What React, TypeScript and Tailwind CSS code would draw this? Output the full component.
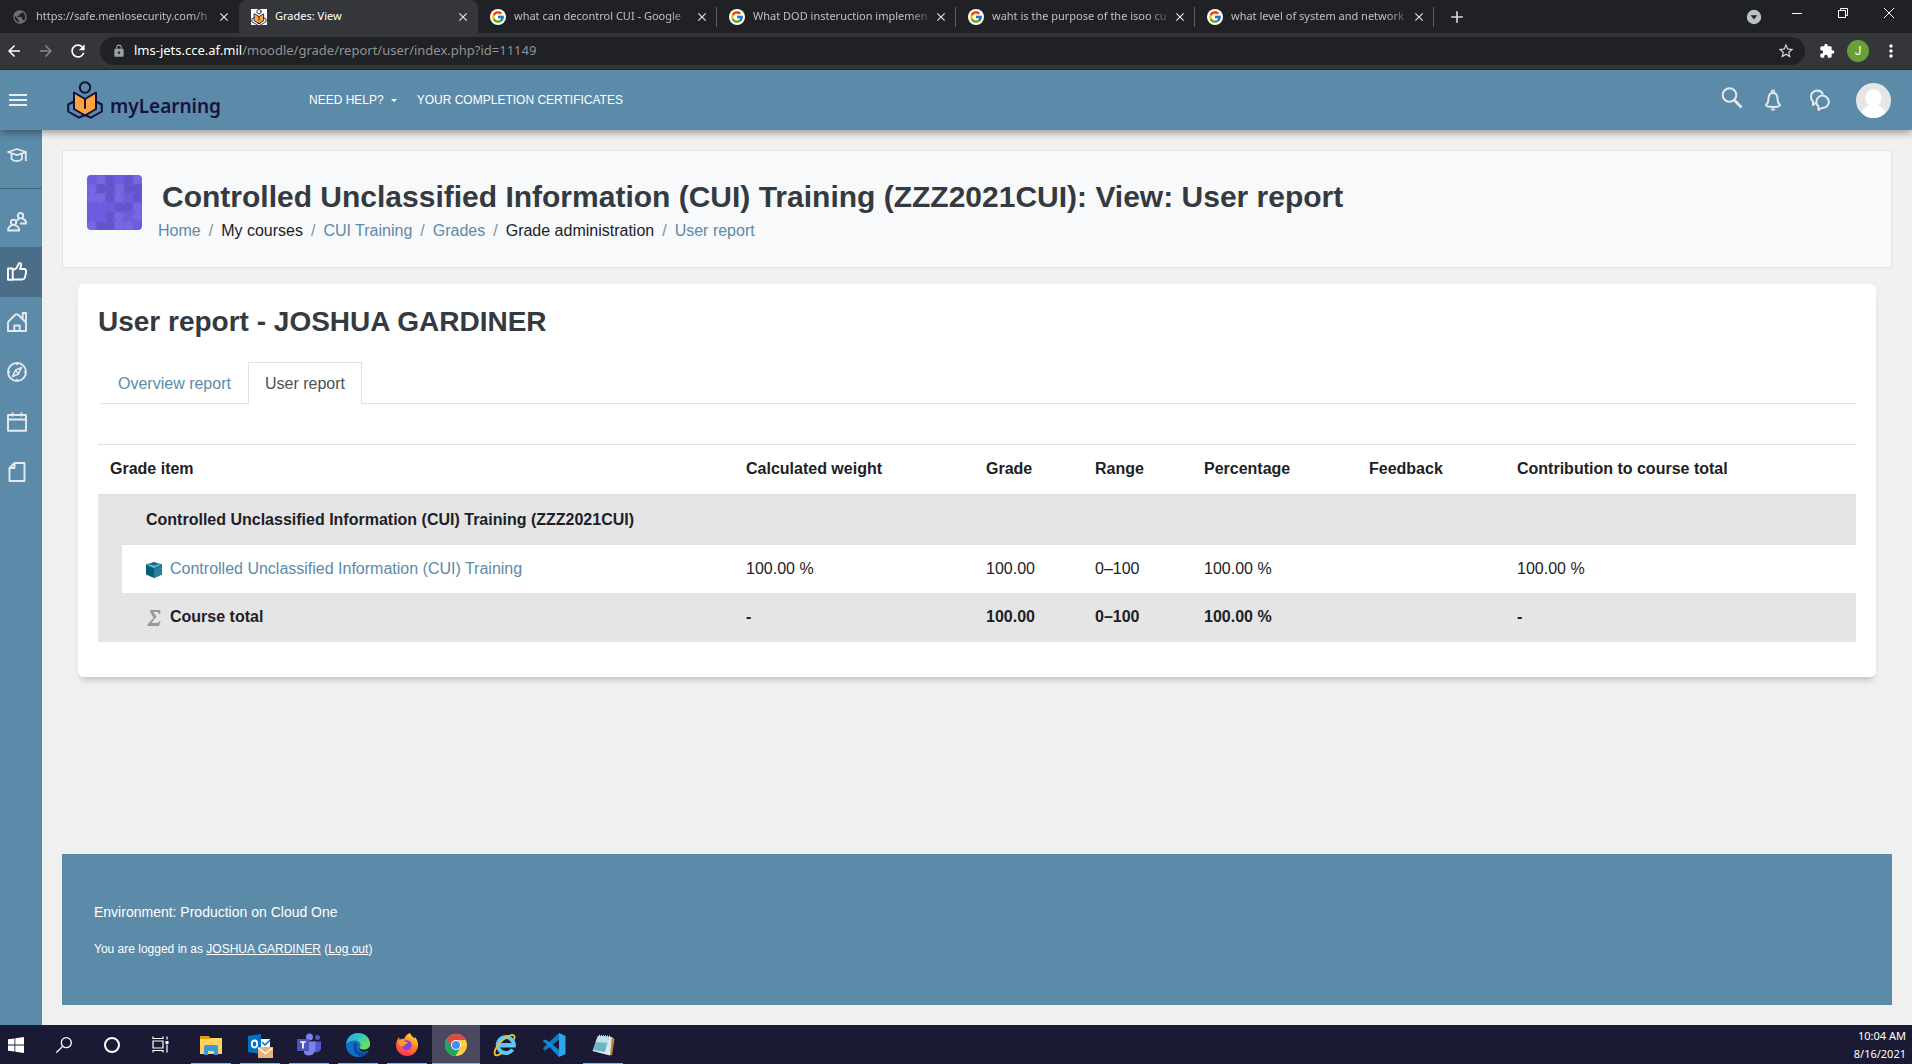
import type { ReactNode } from "react";
import { FcGoogle } from "react-icons/fc";
import { MdExtension, MdLock, MdMoreVert, MdPublic, MdRefresh, MdStarBorder, MdArrowBack, MdArrowForward, MdClose, MdAdd } from "react-icons/md";

/* ---------- browser chrome ---------- */

function LogoMark({ className }: { className: string }) {
  return (
    <svg viewBox="0 0 36 38" className={className} aria-hidden="true">
      <path d="M7 11.500 18 18l11-6.500V29l-11 5.500L7 29z" fill="#ffa13d" />
      <g fill="none" stroke="#13103f" strokeWidth="2" strokeLinejoin="round" strokeLinecap="round">
        <circle cx="18" cy="6.500" r="5.200" />
        <path d="M7 11.500 18 18l11-6.500V28l-11 6.500L7 28z" />
        <path d="M7 20.500 1.200 23.500v7L12 36.700l6-2.700 6 2.700 10.800-6.200v-7L29 20.500" />
        <path d="M18 18v9" />
      </g>
    </svg>
  );
}

const googleIcon = (
  <span className="flex size-4 items-center justify-center rounded-full bg-white">
    <FcGoogle className="size-3.5" />
  </span>
);

const browserTabs: { title: string; icon: ReactNode; active?: boolean; line?: boolean }[] = [
  { title: "https://safe.menlosecurity.com/h", icon: <MdPublic className="size-4 text-[#6f7377]" /> },
  {
    title: "Grades: View",
    active: true,
    icon: (
      <span className="flex size-4 items-center justify-center bg-white">
        <LogoMark className="size-4" />
      </span>
    ),
  },
  { title: "what can decontrol CUI - Google", icon: googleIcon, line: true },
  { title: "What DOD insteruction implemen", icon: googleIcon, line: true },
  { title: "waht is the purpose of the isoo cu", icon: googleIcon, line: true },
  { title: "what level of system and network", icon: googleIcon, line: true },
];

function BrowserTabs() {
  return (
    <div className="flex h-[33px] items-stretch bg-[#202124]">
      {browserTabs.map((t) => (
        <div
          key={t.title}
          className={
            t.active
              ? "flex w-[239px] items-center rounded-t-lg bg-[#35363a] pl-3 text-white"
              : "flex w-[239px] items-center pl-3 text-[#bdc1c6]"
          }
        >
          {t.icon}
          <button
            className={
              t.active
                ? "ml-2 w-[174px] text-left whitespace-nowrap"
                : "ml-2 w-[174px] text-left whitespace-nowrap [mask-image:linear-gradient(to_right,black_156px,transparent_182px)]"
            }
          >
            {t.title}
          </button>
          <button aria-label={"Close " + t.title} className="ml-[7px] text-[#e3e5e8]">
            <MdClose className="size-3.5" />
          </button>
          {t.line && <span className="ml-auto h-5 w-px bg-[#5a5d61]" />}
        </div>
      ))}
      <button aria-label="New tab" className="ml-[13px] flex items-center text-[#d5d7da]">
        <MdAdd className="size-5" />
      </button>
      <div className="ml-auto flex items-center">
        <button aria-label="Search tabs" className="mr-2 flex size-6 items-center justify-center">
          <svg viewBox="0 0 16 16" className="size-4">
            <circle cx="8" cy="8" r="7.200" fill="#bdc1c6" />
            <path d="M4.700 6.300h6.600L8 10.600z" fill="#202124" />
          </svg>
        </button>
        <div className="flex h-full pb-[7px]">
          <button aria-label="Minimize" className="flex w-[46px] items-center justify-center">
            <svg viewBox="0 0 10 10" className="size-2.5" stroke="#fff" fill="none"><path d="M0 5.500h10" /></svg>
          </button>
          <button aria-label="Restore" className="flex w-[46px] items-center justify-center">
            <svg viewBox="0 0 10 10" className="size-2.5" stroke="#fff" fill="none">
              <path d="M.5 2.500h7v7h-7zM2.500 2.500v-2h7v7h-2" />
            </svg>
          </button>
          <button aria-label="Close window" className="flex w-[46px] items-center justify-center">
            <svg viewBox="0 0 10 10" className="size-2.5" stroke="#fff" fill="none"><path d="M0 0l10 10M10 0L0 10" /></svg>
          </button>
        </div>
      </div>
    </div>
  );
}

function AddressBar() {
  return (
    <div className="flex h-[37px] items-center border-b border-[#292a2d] bg-[#35363a] pl-1 text-white">
      <button aria-label="Back" className="flex w-5 justify-center"><MdArrowBack className="size-[18px]" /></button>
      <button aria-label="Forward" className="ml-3 flex w-5 justify-center text-[#85888b]"><MdArrowForward className="size-[18px]" /></button>
      <button aria-label="Reload" className="ml-3 flex w-5 justify-center"><MdRefresh className="size-5" /></button>
      <div className="ml-3 flex h-7 flex-1 items-center rounded-full bg-[#202124] pr-2.5 pl-3 text-[13px]">
        <MdLock className="size-3.5 text-[#9aa0a6]" />
        <div className="ml-2 flex-1 text-[#8f9398]">
          <span className="text-white">lms-jets.cce.af.mil</span>/moodle/grade/report/user/index.php?id=11149
        </div>
        <button aria-label="Bookmark this page"><MdStarBorder className="size-[18px] text-[#d5d7da]" /></button>
      </div>
      <button aria-label="Extensions" className="ml-3.5 flex"><MdExtension className="size-4" /></button>
      <button aria-label="Profile J" className="ml-3 flex size-[22px] items-center justify-center rounded-full bg-[#689f38] font-['Roboto',sans-serif] text-xs">
        J
      </button>
      <button aria-label="Browser menu" className="mr-[11px] ml-3 flex"><MdMoreVert className="size-5" /></button>
    </div>
  );
}

/* ---------- site header ---------- */

function SiteHeader() {
  return (
    <header className="relative z-10 flex h-[60px] items-center bg-[#5c8aa9] text-white shadow-[0_3px_7px_rgba(0,0,0,0.35)]">
      <button aria-label="Toggle side panel" className="ml-[9px] flex h-3 w-[18px] flex-col justify-between">
        <span className="h-0.5 bg-[#e7eef3]" />
        <span className="h-0.5 bg-[#e7eef3]" />
        <span className="h-0.5 bg-[#e7eef3]" />
      </button>
      <a href="#home" className="ml-10 flex w-[242px] items-center">
        <LogoMark className="h-[38px] w-9" />
        <span className="mt-3 ml-[7px] font-['Noto_Sans',sans-serif] text-[19px] leading-6 font-semibold text-[#17123f]">myLearning</span>
      </a>
      <nav className="flex items-center text-xs">
        <button className="flex items-center">
          NEED HELP?
          <span className="ml-[7px] border-x-[3px] border-t-[3px] border-x-transparent border-t-white" />
        </button>
        <a href="#certificates" className="ml-5">YOUR COMPLETION CERTIFICATES</a>
      </nav>
      <div className="mr-[21px] ml-auto flex items-center text-[#e3ebf1]">
        <button aria-label="Search" className="mb-1">
          <svg viewBox="0 0 22 22" className="size-[22px]" fill="none" stroke="currentColor" strokeWidth="2">
            <circle cx="8.500" cy="8" r="6.800" /><path d="M13.300 13 20.500 20.500" strokeWidth="2.600" />
          </svg>
        </button>
        <button aria-label="Notifications" className="ml-5">
          <svg viewBox="0 0 20 22" className="h-[22px] w-5" fill="none" stroke="currentColor" strokeWidth="2" strokeLinejoin="round">
            <path d="M10 4c-3.200 0-4.500 2.700-4.500 6 0 3-.7 4.200-2.500 6 0 1.500 1.500 1.900 7 1.900s7-.4 7-1.900c-1.800-1.800-2.500-3-2.500-6 0-3.300-1.300-6-4.500-6z" />
            <circle cx="10" cy="2.600" r="1.400" strokeWidth="1.600" /><path d="M8.300 20.500h3.400" />
          </svg>
        </button>
        <button aria-label="Messages" className="ml-[26px]">
          <svg viewBox="0 0 22 22" className="size-[22px]" fill="none" stroke="currentColor" strokeWidth="2" strokeLinejoin="round">
            <path d="M14 5.300A6.300 6.300 0 0 0 2 8c0 2 .8 3.400 2 4.500V16l3-2.200" />
            <path d="M9.500 17.500A6.200 6.200 0 1 1 13 19l-3.500 2z" />
          </svg>
        </button>
        <button aria-label="User menu" className="ml-[25px]">
          <svg viewBox="0 0 35 35" className="size-[35px]">
            <defs><clipPath id="avatar"><circle cx="17.500" cy="17.500" r="17.500" /></clipPath></defs>
            <g clipPath="url(#avatar)">
              <rect width="35" height="35" fill="#e6e6e6" />
              <ellipse cx="17.500" cy="15" rx="8" ry="9" fill="#fff" />
              <path d="M5 35c0-9 5-13 12.500-13S30 26 30 35z" fill="#fff" />
            </g>
          </svg>
        </button>
      </div>
    </header>
  );
}

/* ---------- sidebar ---------- */

const sideItems: { label: string; active?: boolean; art: ReactNode }[] = [
  {
    label: "Participants",
    art: (
      <>
        <circle cx="6.500" cy="10.300" r="2.700" /><path d="M4.800 13.300C2.500 14 1 15.800 1 18.500h11.200c0-2.700-1.500-4.500-4-5.200" />
        <circle cx="13.500" cy="3.700" r="2.700" /><path d="M11.800 7c-1 .4-1.600 1-2 1.700M15.300 6.700c2.400.8 3.800 2.400 3.800 4.800h-6" />
      </>
    ),
  },
  {
    label: "Grades",
    active: true,
    art: <path d="M1 6.500h4.700v11.300H1zM5.700 8 9 6.700C10.300 5 11 3 12 1.200c2-.5 2.500 1 2 2.600L13 7h4.500c2.200.6 1.700 2.400 1.400 4.300l-1 4.200c-.5 1.500-1.200 2-2.800 2H5.700" />,
  },
  {
    label: "Site home",
    art: <path d="M1 10v9h18V1h-3.300v5M1 10l7.500-7.500H11l8 8M7.300 19v-5.500h5.400V19" />,
  },
  {
    label: "Dashboard",
    art: (
      <>
        <circle cx="10" cy="10" r="9" />
        <path d="M14.500 5.500 11.500 12l-6 2.500 3-6.300zM8.500 8.500l3 3M10 1v2.200M10 16.800V19M1 10h2.200M16.800 10H19" strokeWidth="1.500" />
      </>
    ),
  },
  { label: "Calendar", art: <path d="M1 3h18v15.700H1zM1 7.500h18M5.500.5v4M14.500.5v4" /> },
  { label: "Private files", art: <path d="M7.500 1H17.500v18H2.500V6zM7.500 1v5h-5" /> },
];

function Sidebar() {
  return (
    <aside className="flex w-[42px] shrink-0 flex-col bg-[#5c8aa9] text-[#e3ebf1]">
      <button aria-label="Course" className="mb-2 flex h-[59px] items-center border-b border-[#43667d] pb-2 pl-[7px]">
        <svg viewBox="0 0 20 14" className="h-3.5 w-5" fill="none" stroke="currentColor" strokeWidth="1.800" strokeLinejoin="round">
          <path d="M1 4 10 1l9 3-9 3.200zM4.500 5.500V11c2 2.700 8.500 2.700 10.500 0V5.500M18.800 4v9" />
        </svg>
      </button>
      {sideItems.map((s) => (
        <button
          key={s.label}
          aria-label={s.label}
          className={s.active ? "flex h-[50px] items-center bg-[#4a6e87] pl-[7px] text-white" : "flex h-[50px] items-center pl-[7px]"}
        >
          <svg viewBox="0 0 20 20" className="size-5" fill="none" stroke="currentColor" strokeWidth="1.900" strokeLinejoin="round">
            {s.art}
          </svg>
        </button>
      ))}
    </aside>
  );
}

/* ---------- page content ---------- */

const dots = [
  [1, 0, "l"], [2, 0, "d"], [4, 0, "d"], [5, 0, "l"], [0, 1, "l"], [1, 1, "d"], [2, 1, "d"], [3, 1, "l"], [4, 1, "d"], [5, 1, "d"],
  [0, 2, "l"], [1, 2, "l"], [2, 2, "d"], [3, 2, "l"], [5, 2, "d"], [3, 3, "d"], [4, 3, "d"], [5, 3, "l"], [2, 4, "d"], [3, 4, "l"],
  [5, 4, "l"], [0, 5, "l"], [1, 5, "d"], [2, 5, "d"], [3, 5, "l"], [4, 5, "l"],
] as const;

function CourseImage() {
  return (
    <svg viewBox="0 0 55 55" className="size-[55px] shrink-0 rounded" role="img" aria-label="Course image">
      <rect width="55" height="55" fill="#6c5ce0" />
      {dots.map(([x, y, t]) => (
        <circle
          key={x + "-" + y}
          cx={x * 9.2 + 4.6}
          cy={y * 9.2 + 4.6}
          r="4.900"
          fill={t === "l" ? "#fff" : "#222"}
          opacity={t === "l" ? 0.08 : 0.1}
        />
      ))}
    </svg>
  );
}

const crumbs = [
  { t: "Home", link: true },
  { t: "My courses" },
  { t: "CUI Training", link: true },
  { t: "Grades", link: true },
  { t: "Grade administration" },
  { t: "User report", link: true },
];

function PageHeader() {
  return (
    <section className="flex border border-[#dee2e6] bg-[#f8f9fb] py-6 pl-6">
      <CourseImage />
      <div className="ml-4">
        <h1 className="ml-1 text-[30px] leading-[44px] font-bold text-[#343a40]">
          Controlled Unclassified Information (CUI) Training (ZZZ2021CUI): View: User report
        </h1>
        <ol className="flex leading-6 text-[#1d2125]">
          {crumbs.map((c, i) => (
            <li key={c.t} className="flex">
              {i > 0 && <span className="px-2 text-[#868e96]">/</span>}
              {c.link ? <a href="#crumb" className="text-[#5c8aa9]">{c.t}</a> : c.t}
            </li>
          ))}
        </ol>
      </div>
    </section>
  );
}

function ScormIcon() {
  return (
    <svg viewBox="0 0 16 16" className="mt-0.5 size-4" aria-hidden="true">
      <path d="M8 0l8 2.500v10L8 16l-8-3.500v-10z" fill="#00607a" />
      <path d="M8 7 16 3.500v9L8 16z" fill="#2b7f96" />
      <path d="M.8 3 8 .8 15.200 3 8 6.200z" fill="#63b3c8" />
      <path d="M3.500 2.200 8 .6l4.500 1.600L8 3.600z" fill="#0a6a84" />
    </svg>
  );
}

function SigmaIcon() {
  return (
    <svg viewBox="0 0 16 16" className="mt-0.5 size-4" aria-hidden="true">
      <path d="M4 0h10.500l-.5 4h-1.200c0-1.500-.8-2-2.300-2H7.500l3 4.500-5 6.500h4.700c2 0 2.800-.8 3.300-2h1.200L13 16H1.500v-1.500L7.500 8 4 1.500z" fill="#999" />
    </svg>
  );
}

function GradeTable() {
  return (
    <table className="mt-10 w-full table-fixed border-collapse text-left text-[#1d2125]">
      <colgroup>
        <col className="w-6" />
        <col className="w-[612px]" />
        <col className="w-[240px]" />
        <col className="w-[109px]" />
        <col className="w-[109px]" />
        <col className="w-[165px]" />
        <col className="w-[148px]" />
        <col />
      </colgroup>
      <thead>
        <tr className="h-[50px] border-t border-b-2 border-t-[#dee2e6] border-b-[#dee2e6]">
          <th colSpan={2} className="px-3">Grade item</th>
          <th className="px-3">Calculated weight</th>
          <th className="px-3">Grade</th>
          <th className="px-3">Range</th>
          <th className="px-3">Percentage</th>
          <th className="px-3">Feedback</th>
          <th className="px-3">Contribution to course total</th>
        </tr>
      </thead>
      <tbody>
        <tr className="h-[50px] bg-[#e5e5e5]">
          <td rowSpan={3} />
          <th colSpan={7} className="border-b border-[#dee2e6] px-6">
            Controlled Unclassified Information (CUI) Training (ZZZ2021CUI)
          </th>
        </tr>
        <tr className="h-12">
          <th className="px-6 font-normal">
            <span className="flex items-center gap-2">
              <ScormIcon />
              <a href="#item" className="text-[#5c8aa9]">Controlled Unclassified Information (CUI) Training</a>
            </span>
          </th>
          <td className="px-3">100.00 %</td>
          <td className="px-3">100.00</td>
          <td className="px-3">0–100</td>
          <td className="px-3">100.00 %</td>
          <td className="px-3" />
          <td className="px-3">100.00 %</td>
        </tr>
        <tr className="h-[49px] bg-[#e5e5e5] font-bold">
          <th className="px-6">
            <span className="flex items-center gap-2">
              <SigmaIcon />
              Course total
            </span>
          </th>
          <td className="px-3">-</td>
          <td className="px-3">100.00</td>
          <td className="px-3">0–100</td>
          <td className="px-3">100.00 %</td>
          <td className="px-3" />
          <td className="px-3">-</td>
        </tr>
      </tbody>
    </table>
  );
}

function ReportCard() {
  return (
    <section className="mx-4 mt-4 rounded-md bg-white px-5 pt-5 pb-[35px] shadow-[0_6px_6px_-3px_rgba(0,0,0,0.2)]">
      <h2 className="text-[28px] leading-9 font-bold text-[#343a40]">User report - JOSHUA GARDINER</h2>
      <div className="mt-[22px] ml-[3px] flex h-[42px] border-b border-[#dee2e6]">
        <a href="#overview" className="flex h-[42px] items-center border border-b-0 border-transparent px-4 text-[#5c8aa9]">
          Overview report
        </a>
        <a href="#user" aria-current="page" className="flex h-[42px] items-center border border-b-0 border-[#dee2e6] bg-white px-4 text-[#495057]">
          User report
        </a>
      </div>
      <GradeTable />
    </section>
  );
}

function Footer() {
  return (
    <footer className="mt-auto bg-[#5c8aa9] px-8 pt-12 pb-[46px] text-white">
      <p className="text-sm leading-5">Environment: Production on Cloud One</p>
      <p className="mt-[17px] text-xs leading-5">
        You are logged in as <a href="#profile" className="underline">JOSHUA GARDINER</a> (<a href="#logout" className="underline">Log out</a>)
      </p>
    </footer>
  );
}

/* ---------- taskbar ---------- */

const apps: { name: string; open?: boolean; active?: boolean; art: ReactNode }[] = [
  {
    name: "File Explorer",
    open: true,
    art: (
      <>
        <path d="M1 3h9l1 2v4H1z" fill="#e09f10" />
        <path d="M1 6h9l1-1h12v16H1z" fill="#ffd35c" />
        <path d="M5 14q0-2 2-2h10q2 0 2 2v8h-4v-4H9v4H5z" fill="#3f96d8" />
      </>
    ),
  },
  {
    name: "Outlook",
    open: true,
    art: (
      <>
        <path d="M0 3 13 1v20L0 19z" fill="#0072c6" />
        <path d="M13 6h9v12h-9z" fill="#fff" />
        <path d="M14 9l3 3 5-5" fill="none" stroke="#0072c6" strokeWidth="1.500" />
        <ellipse cx="6.500" cy="11" rx="2.700" ry="3.500" fill="none" stroke="#fff" strokeWidth="1.800" />
        <path d="M10 14h15v11H10z" fill="#e8b476" />
        <path d="M10.500 15l7 5.500 7-5.500" fill="none" stroke="#fff" strokeWidth="1.300" />
      </>
    ),
  },
  {
    name: "Teams",
    open: true,
    art: (
      <>
        <circle cx="12.500" cy="4" r="3.500" fill="#7b83eb" />
        <circle cx="20.500" cy="4.500" r="2.500" fill="#5059c9" />
        <path d="M16 8.500h8v7q-1 4.500-6 3.500z" fill="#5059c9" />
        <path d="M7 8.500h11.500V16q-1 6.500-6.500 6.500T7 18z" fill="#7b83eb" />
        <path d="M0 6h12v12H0z" fill="#4b53bc" />
        <path d="M3.200 9h5.600M6 9v6.500" stroke="#fff" strokeWidth="1.700" />
      </>
    ),
  },
  {
    name: "Edge",
    open: true,
    art: (
      <>
        <defs>
          <linearGradient id="edgeTop" x1="0" y1="0" x2="1" y2=".6">
            <stop offset="0" stopColor="#2aa7e5" /><stop offset=".5" stopColor="#2fc5c8" /><stop offset="1" stopColor="#6be34e" />
          </linearGradient>
        </defs>
        <circle cx="12" cy="12" r="12" fill="#0f6fc9" />
        <path d="M0 11C1 4.500 6 0 12 0c7 0 12 5 12 10.500 0 4-3 6-6.500 6-3 0-4.300-1.200-3.500-2.300 2-3-1-6.700-5-6.700-4 0-7 1.500-9 3.500z" fill="url(#edgeTop)" />
        <path d="M9 9c-3 3-2 13 6 14.500 3.500-.7 6-2.500 7.500-5-8 3.500-14-1-11-6.500z" fill="#0c4a9c" />
        <path d="M13.700 14c-.8 1.400 1 2.700 3.800 2.700 3.500 0 5-1 6.500-2.700v4h-2c-5 2-10 0-8.300-4z" fill="#1c1b35" />
      </>
    ),
  },
  {
    name: "Firefox",
    open: true,
    art: (
      <>
        <defs>
          <linearGradient id="fox" x1=".8" y1="0" x2=".3" y2="1">
            <stop offset="0" stopColor="#ffe226" /><stop offset=".45" stopColor="#ff8a1f" /><stop offset="1" stopColor="#ff2a5f" />
          </linearGradient>
        </defs>
        <path d="M15 0c1 3 3 3.500 4.500 5.500L20 4c2.500 3 3.300 6 3 9-.7 6-5.500 10-11 10S1 18.500 1 12.500C1 9 2 6.500 4 4l.7 2.700C6 5.500 7 5.500 9 6c1.500-3 3-5 6-6z" fill="url(#fox)" />
        <circle cx="11.700" cy="12.300" r="5" fill="#8a3fe0" />
        <path d="M3.500 8c3-2 5-1 6.500.7l3 .3c-.5 1.700-2 2-3.200 2.700-.4 2-2.200 2-4.300 1.300C4 12 3 10 3.500 8z" fill="#ff9a2b" />
      </>
    ),
  },
  {
    name: "Chrome",
    open: true,
    active: true,
    art: (
      <>
        <circle cx="12" cy="12" r="11" fill="#ffcd46" />
        <path d="M12 12 2.470 6.500A11 11 0 0 0 11.500 23l4.800-8.500z" fill="#1da462" />
        <path d="M21.800 7H12a5 5 0 0 0-4.300 7.500L2.800 6A11 11 0 0 1 21.800 7z" fill="#dd4b3e" />
        <circle cx="12" cy="12" r="5" fill="#fff" />
        <circle cx="12" cy="12" r="4" fill="#4a8af4" />
      </>
    ),
  },
  {
    name: "Internet Explorer",
    art: (
      <>
        <path d="M19.500 16.500A8 8 0 1 1 20.800 12.500H6" fill="none" stroke="#5cc8f5" strokeWidth="4" />
        <path d="M8 11h10" stroke="#5cc8f5" strokeWidth="2" />
        <path d="M21 6.500C22.500 3 21 1 17 2.500 8 6 0 17 2 21.500c1 1.700 4 .5 7-1.500" fill="none" stroke="#f5c12e" strokeWidth="1.800" />
      </>
    ),
  },
  {
    name: "Visual Studio Code",
    art: (
      <>
        <path d="M17 0 3.500 12.500l-2.500 3L3 17.500l3-2L18 6z" fill="#0b7cc4" />
        <path d="M17 24 4 10.500.5 8 3 6.500l3 1.500L18 17.500z" fill="#1388d2" />
        <path d="M17 0l6.500 3v18L17 24z" fill="#2ba5f0" />
      </>
    ),
  },
  {
    name: "Notepad",
    open: true,
    art: (
      <>
        <path d="M21 4l2.500 2L21 22l-2.500.5z" fill="#b98a3b" />
        <path d="M7 3l14 1-2 18.500L1.500 18z" fill="#dfe9ec" />
        <path d="M7 3l11 1-4 15-12-2z" fill="#6fb4c2" />
        <path d="M7 3l11 1-1.500 6-12-1z" fill="#bfe0e6" />
        <path d="M8 2.500l12 1" stroke="#eee" strokeWidth="1.500" strokeDasharray="1 1" />
      </>
    ),
  },
];

function Taskbar() {
  return (
    <div className="flex h-[39px] bg-[#1b1a34]">
      <button aria-label="Start" className="flex w-10 items-center pl-2">
        <svg viewBox="0 0 16 16" className="size-4" fill="#fff">
          <path d="M0 2.300 6.500 1.400V7.600H0zM7.300 1.300 16 0v7.600H7.300zM0 8.400h6.500v6.200L0 13.700zM7.300 8.400H16V16l-8.700-1.300z" />
        </svg>
      </button>
      <button aria-label="Search Windows" className="flex w-12 items-center justify-center">
        <svg viewBox="0 0 16 16" className="size-4" fill="none" stroke="#fff" strokeWidth="1.300">
          <circle cx="10.300" cy="5.700" r="5" /><path d="M6.600 9.400.4 15.600" />
        </svg>
      </button>
      <button aria-label="Cortana" className="flex w-12 items-center justify-center">
        <span className="size-4 rounded-full border-2 border-white" />
      </button>
      <button aria-label="Task view" className="flex w-12 items-center justify-center">
        <svg viewBox="0 0 17 17" className="size-[17px]" fill="none" stroke="#fff" strokeWidth="1.200">
          <path d="M1 5h10v7H1zM1 .5v2h10v-2M1 16.500v-2h10v2M15 .5v3M15 8.500v8" />
          <path d="M13.500 5h3v3h-3z" fill="#fff" stroke="none" />
        </svg>
      </button>
      <div className="ml-[3px] flex gap-px">
        {apps.map((a) => (
          <button
            key={a.name}
            aria-label={a.name}
            className={a.active ? "flex w-12 flex-col items-center justify-between bg-[#4a4960] pt-2" : "flex w-12 flex-col items-center justify-between pt-2"}
          >
            <svg viewBox="0 0 24 24" className="size-6 overflow-visible">{a.art}</svg>
            {a.open && <span className={a.active ? "h-px w-12 bg-[#76b9ed]" : "h-px w-10 bg-[#76b9ed]"} />}
          </button>
        ))}
      </div>
      <div className="mr-1.5 ml-auto pt-0.5 text-right text-[11px] leading-[18px] text-white">
        <div>10:04 AM</div>
        <div>8/16/2021</div>
      </div>
    </div>
  );
}

export default function App() {
  return (
    <div className="flex min-h-screen flex-col bg-[#f0f0f0] font-['Liberation_Sans',Arial,sans-serif] text-base">
      <div className="font-['Noto_Sans',sans-serif] text-[11px]">
        <BrowserTabs />
        <AddressBar />
      </div>
      <SiteHeader />
      <div className="flex flex-1">
        <Sidebar />
        <main className="flex flex-1 flex-col px-5 py-5">
          <PageHeader />
          <ReportCard />
          <Footer />
        </main>
      </div>
      <div className="font-['Noto_Sans',sans-serif]">
        <Taskbar />
      </div>
    </div>
  );
}
